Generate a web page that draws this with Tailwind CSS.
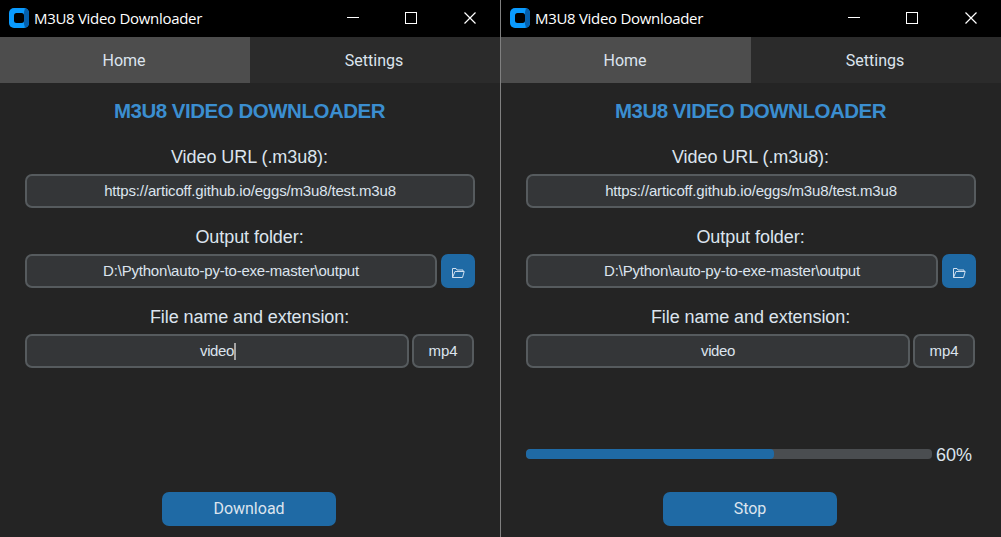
<!DOCTYPE html>
<html lang="en">
<head>
<meta charset="utf-8">
<title>M3U8 Video Downloader</title>
<script src="https://cdn.jsdelivr.net/npm/@tailwindcss/browser@4"></script>
</head>
<body class="flex h-[537px] w-[1001px] overflow-hidden bg-[#242424] font-['Liberation_Sans',Arial,sans-serif] text-[#dce4ee]">

<svg class="hidden">
  <symbol id="logo" viewBox="0 0 20 20">
    <rect width="20" height="20" rx="5" fill="#0a9bff"/>
    <path d="M15 4l1-3.800A5 5 0 0 1 20 5v10a5 5 0 0 1-4 4.800L15 16z" fill="#0560ad"/>
    <rect x="5" y="5" width="10" height="10" rx="2.500" fill="#000"/>
  </symbol>
  <symbol id="folder" viewBox="0 0 14 12">
    <path d="M1.500 10.500V1.500H5l1 1.500h6v1.500M1.500 10.500L4 4.500h9.200L11.500 10.500z" fill="none" stroke="#cfdfef" stroke-width="1"/>
  </symbol>
  <symbol id="controls" viewBox="0 0 130 12">
    <path d="M0 5.500h12" stroke="#fff" fill="none"/>
    <rect x="58.500" y=".5" width="11" height="11" stroke="#fff" fill="none"/>
    <path d="M117.500.5l11 11M128.500.5l-11 11" stroke="#fff" stroke-width="1.200" fill="none"/>
  </symbol>
</svg>

<section class="flex w-[500px] flex-col">
  <header class="flex h-[37px] items-center bg-black pl-[9px] pr-[23px]">
    <svg class="mt-[-1px] size-5"><use href="#logo"/></svg>
    <h1 class="mt-[-2px] ml-[5px] whitespace-nowrap font-['Open_Sans',sans-serif] text-[15px] leading-5 tracking-[-0.3px] text-white">M3U8 Video Downloader</h1>
    <svg class="mt-[-1px] ml-auto h-3 w-[130px]"><use href="#controls"/></svg>
  </header>
  <nav class="flex h-[46px] bg-[#2b2b2b] text-center font-[Roboto,sans-serif] text-base leading-[48px]">
    <a class="w-[250px] bg-[#4d4d4d] pr-0.5">Home</a>
    <a class="w-[250px] pr-0.5">Settings</a>
  </nav>
  <main class="flex grow flex-col px-[25px] text-center">
    <h2 class="mt-4 h-6 pr-px text-[20.5px] leading-6 font-bold tracking-[-0.48px] whitespace-nowrap text-[#3b8ed0]">M3U8 VIDEO DOWNLOADER</h2>
    <label class="mt-[22px] h-6 pr-px text-lg leading-6 tracking-[-0.06px]">Video URL (.m3u8):</label>
    <div class="mt-[5px] h-[34px] rounded-[7px] border-2 border-[#565b5e] bg-[#343638] text-[15px] leading-[30px] tracking-[-0.16px]">https://articoff.github.io/eggs/m3u8/test.m3u8</div>
    <label class="mt-[17px] h-6 pr-px text-lg leading-6 tracking-[-0.06px]">Output folder:</label>
    <div class="mt-[5px] flex h-[34px] gap-1">
      <div class="w-[412px] rounded-[7px] border-2 border-[#565b5e] bg-[#343638] text-[15px] leading-[30px] tracking-[-0.2px]">D:\Python\auto-py-to-exe-master\output</div>
      <button class="flex w-[34px] items-center justify-center rounded-[7px] bg-[#1f6aa5]"><svg class="mt-1 h-3 w-3.5"><use href="#folder"/></svg></button>
    </div>
    <label class="mt-[17px] h-6 pr-px text-lg leading-6 tracking-[-0.08px]">File name and extension:</label>
    <div class="mt-[5px] flex h-[34px] gap-[3px] text-[15px] leading-[30px]">
      <div class="flex w-[384px] items-center justify-center rounded-[7px] border-2 border-[#565b5e] bg-[#343638] tracking-[-0.4px]"><span>video</span><i class="-mr-0.5 h-[17px] w-0.5 bg-[#a5a5a5]"></i></div>
      <div class="w-[62px] rounded-[7px] border-2 border-[#565b5e] bg-[#343638]">mp4</div>
    </div>
    <button class="mt-auto mb-[11px] ml-[137px] h-[34px] w-[174px] rounded-[7px] bg-[#1f6aa5] font-[Roboto,sans-serif] text-base leading-[34px]">Download</button>
  </main>
</section>

<section class="flex w-[501px] flex-col border-l border-[#808080]">
  <header class="flex h-[37px] items-center bg-black pl-[9px] pr-[23px]">
    <svg class="mt-[-1px] size-5"><use href="#logo"/></svg>
    <h1 class="mt-[-2px] ml-[5px] whitespace-nowrap font-['Open_Sans',sans-serif] text-[15px] leading-5 tracking-[-0.3px] text-white">M3U8 Video Downloader</h1>
    <svg class="mt-[-1px] ml-auto h-3 w-[130px]"><use href="#controls"/></svg>
  </header>
  <nav class="flex h-[46px] bg-[#2b2b2b] text-center font-[Roboto,sans-serif] text-base leading-[48px]">
    <a class="w-[250px] bg-[#4d4d4d] pr-0.5">Home</a>
    <a class="w-[250px] pr-0.5">Settings</a>
  </nav>
  <main class="flex grow flex-col px-[25px] text-center">
    <h2 class="mt-4 h-6 pr-px text-[20.5px] leading-6 font-bold tracking-[-0.48px] whitespace-nowrap text-[#3b8ed0]">M3U8 VIDEO DOWNLOADER</h2>
    <label class="mt-[22px] h-6 pr-px text-lg leading-6 tracking-[-0.06px]">Video URL (.m3u8):</label>
    <div class="mt-[5px] h-[34px] rounded-[7px] border-2 border-[#565b5e] bg-[#343638] text-[15px] leading-[30px] tracking-[-0.16px]">https://articoff.github.io/eggs/m3u8/test.m3u8</div>
    <label class="mt-[17px] h-6 pr-px text-lg leading-6 tracking-[-0.06px]">Output folder:</label>
    <div class="mt-[5px] flex h-[34px] gap-1">
      <div class="w-[412px] rounded-[7px] border-2 border-[#565b5e] bg-[#343638] text-[15px] leading-[30px] tracking-[-0.2px]">D:\Python\auto-py-to-exe-master\output</div>
      <button class="flex w-[34px] items-center justify-center rounded-[7px] bg-[#1f6aa5]"><svg class="mt-1 h-3 w-3.5"><use href="#folder"/></svg></button>
    </div>
    <label class="mt-[17px] h-6 pr-px text-lg leading-6 tracking-[-0.08px]">File name and extension:</label>
    <div class="mt-[5px] flex h-[34px] gap-[3px] text-[15px] leading-[30px]">
      <div class="w-[384px] rounded-[7px] border-2 border-[#565b5e] bg-[#343638] tracking-[-0.4px]">video</div>
      <div class="w-[62px] rounded-[7px] border-2 border-[#565b5e] bg-[#343638]">mp4</div>
    </div>
    <div class="mt-[74px] flex h-6 items-center">
      <div class="h-2.5 w-[406px] overflow-hidden rounded-[4px] bg-[#4a4d50]"><div class="h-full rounded-[4px] bg-[#1f6aa5]" style="width:248px"></div></div>
      <span class="mt-0.5 ml-1 text-lg leading-6">60%</span>
    </div>
    <button class="mt-auto mb-[11px] ml-[137px] h-[34px] w-[174px] rounded-[7px] bg-[#1f6aa5] font-[Roboto,sans-serif] text-base leading-[34px]">Stop</button>
  </main>
</section>
</body>
</html>
